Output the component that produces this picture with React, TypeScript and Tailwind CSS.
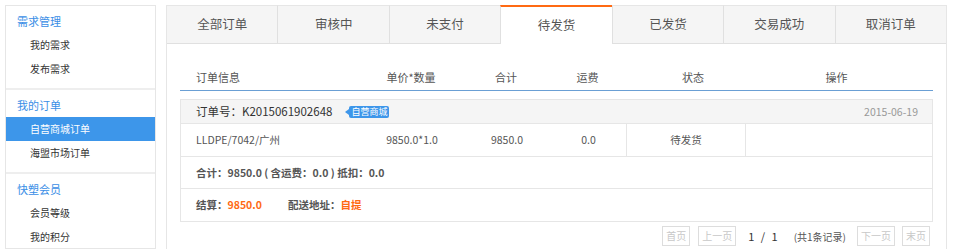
import React from "react";

const tabs = ["全部订单", "审核中", "未支付", "待发货", "已发货", "交易成功", "取消订单"];

const menu = [
  { title: "需求管理", items: ["我的需求", "发布需求"] },
  { title: "我的订单", items: ["自营商城订单", "海盟市场订单"] },
  { title: "快塑会员", items: ["会员等级", "我的积分"] },
];

const cols = "grid grid-cols-[180px_102px_88px_75px_120px_183px]";

function Sidebar() {
  return (
    <div className="w-[151px] shrink-0 border border-[#e6e6e6] bg-white">
      {menu.map((sec, i) => (
        <div
          key={sec.title}
          className={`pt-[4px] pb-[7px] ${i > 0 ? "border-t-2 border-[#eeeeee]" : ""}`}
        >
          <div className="h-[23px] leading-[23px] pl-[11px] text-[11px] text-[#3a8ee6]">
            {sec.title}
          </div>
          {sec.items.map((it) => (
            <div
              key={it}
              className={`h-[24px] leading-[24px] pl-[24px] text-[10px] ${
                it === "自营商城订单" ? "bg-[#3d96ea] text-white" : "text-[#333]"
              }`}
            >
              {it}
            </div>
          ))}
        </div>
      ))}
    </div>
  );
}

function Pager() {
  const btn = "h-[20px] leading-[18px] px-[3px] border border-[#dddddd] text-[#c8c8c8] text-[10px]";
  return (
    <div className="flex items-center justify-end pr-[3px] mt-[4px]">
      <span className={btn}>首页</span>
      <span className={`${btn} ml-[8px]`}>上一页</span>
      <span className="ml-[12px] text-[11px] text-[#333] tracking-[2px]">1 / 1</span>
      <span className="ml-[14px] text-[10px] text-[#555]">(共1条记录)</span>
      <span className={`${btn} ml-[11px]`}>下一页</span>
      <span className={`${btn} ml-[7px]`}>末页</span>
    </div>
  );
}

export default function App() {
  return (
    <div
      className="w-[955px] h-[249px] overflow-hidden bg-white flex gap-[10px] pl-[5px] pt-[5px]"
      style={{ fontFamily: '"Noto Sans CJK SC", "Noto Sans", sans-serif' }}
    >
      <Sidebar />

      {/* main panel */}
      <div className="w-[781px] shrink-0 border-x border-[#e6e6e6] bg-white">
        <div className="flex">
          {tabs.map((t, i) => (
            <div
              key={t}
              className={`flex-1 h-[39px] flex items-center justify-center text-[12.5px] text-[#555] border-t ${
                i === 3
                  ? "bg-white border-t-2 border-t-[#ff6a13]"
                  : "bg-[#f5f5f5] border-t-[#e6e6e6] border-b border-b-[#e0e0e0]"
              } ${i > 0 ? "border-l border-l-[#e0e0e0]" : ""}`}
            >
              {t}
            </div>
          ))}
        </div>

        <div className="px-[13px]">
          <div className={`${cols} mt-[21px] h-[26px] items-center text-[11px] text-[#555] border-b border-[#6a9fd4]`}>
            <div className="pl-[16px]">订单信息</div>
            <div className="text-center">单价*数量</div>
            <div className="text-center">合计</div>
            <div className="text-center">运费</div>
            <div className="text-center pl-[16px]">状态</div>
            <div className="text-center">操作</div>
          </div>

          <div className="mt-[8px] border border-[#e6e6e6]">
            <div className="h-[24px] bg-[#f5f5f5] flex items-center pl-[15px] pr-[14px] border-b border-[#e6e6e6]">
              <span className="text-[11.5px] text-[#333]">订单号：K2015061902648</span>
              <span className="relative ml-[17px] h-[12px] leading-[12px] px-[2px] bg-[#3d96ea] text-white text-[9px] rounded-[2px]">
                <span className="absolute left-[-4px] top-[3px] w-0 h-0 border-y-[3px] border-y-transparent border-r-[4px] border-r-[#3d96ea]" />
                自营商城
              </span>
              <span className="ml-auto text-[10.5px] text-[#999]">2015-06-19</span>
            </div>

            <div className={`${cols} h-[33px] items-center text-[10.5px] text-[#555] border-b border-[#e6e6e6]`}>
              <div className="pl-[15px]">LLDPE/7042/广州</div>
              <div className="text-center">9850.0*1.0</div>
              <div className="text-center">9850.0</div>
              <div className="text-center">0.0</div>
              <div className="h-full flex items-center justify-center border-x border-[#e6e6e6]">待发货</div>
              <div />
            </div>

            <div className="h-[32px] flex items-center pl-[15px] text-[10.5px] font-bold text-[#555] border-b border-[#e6e6e6]">
              合计：9850.0 ( 含运费：0.0 ) 抵扣：0.0
            </div>

            <div className="h-[32px] flex items-center pl-[15px] text-[10.5px] font-bold text-[#555]">
              <span>结算：</span>
              <span className="text-[#ff6a13]">9850.0</span>
              <span className="ml-[26px]">配送地址：</span>
              <span className="text-[#ff6a13]">自提</span>
            </div>
          </div>

          <Pager />
        </div>
      </div>
    </div>
  );
}
